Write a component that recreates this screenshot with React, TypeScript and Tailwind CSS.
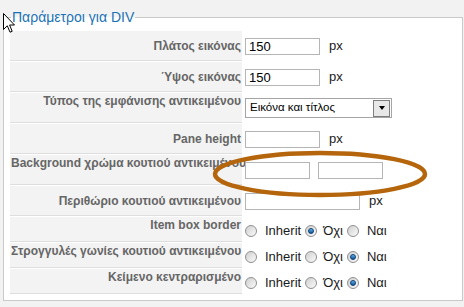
import type { ReactNode } from "react";

type RadioValue = "inherit" | "no" | "yes";

const Radio = ({ checked }: { checked: boolean }) => (
	<span className="flex h-[12px] w-[12px] shrink-0 items-center justify-center rounded-full border border-[#8f8f8f] bg-linear-to-br from-[#cfcfcf] to-[#fbfbfb]">
		{checked && (
			<span className="h-[6px] w-[6px] rounded-full border border-[#0d3f73] bg-linear-to-b from-[#5fb6f0] to-[#0b5396]" />
		)}
	</span>
);

const RadioGroup = ({ value }: { value: RadioValue }) => (
	<div className="flex items-center pt-[2px] text-[13px] text-[#1a1a1a]">
		<Radio checked={value === "inherit"} />
		<span className="ml-[8px]">Inherit</span>
		<span className="ml-[4px]">
			<Radio checked={value === "no"} />
		</span>
		<span className="ml-[6px]">Όχι</span>
		<span className="ml-[4px]">
			<Radio checked={value === "yes"} />
		</span>
		<span className="ml-[8px]">Ναι</span>
	</div>
);

const TextInput = ({ value = "", width }: { value?: string; width: string }) => (
	<div className={`h-[17px] ${width} border border-[#b5b5b5] bg-white px-[3px] text-[13px] leading-[15px] text-black`}>
		{value}
	</div>
);

const Px = () => <span className="ml-[9px] text-[13px] text-[#1a1a1a]">px</span>;

type RowProps = { label: string; top?: boolean; short?: boolean; children: ReactNode };

// long labels overflow to the right, like the old table cells did
const Row = ({ label, top = false, short = false, children }: RowProps) => (
	<div className={`flex ${short ? "h-[25px]" : "h-[30px]"}`}>
		<div
			className={`flex w-[232px] shrink-0 border-b border-[#dedede] bg-[#f3f3f3] pl-[1px] pr-[1px] text-[12px] leading-[14px] font-bold text-[#666] ${
				top ? "items-start pt-[1px]" : "items-center"
			}`}
		>
			<div className="w-full whitespace-nowrap text-right">{label}</div>
		</div>
		<div className="flex flex-1 items-center pl-[3px]">{children}</div>
	</div>
);

export default function App() {
	return (
		<div className="relative h-[307px] w-[464px] overflow-hidden bg-[#f2f2f2] font-['Liberation_Sans',Arial,sans-serif]">
			<fieldset className="ml-[3px] mt-[9px] w-[460px] border border-[#c9c9c9] bg-white px-[6px] pt-[6px] pb-[6px]">
				<legend className="ml-[1px] px-[1px] text-[14px] leading-[16px] text-[#1b72b6]">Παράμετροι για DIV</legend>
				<div className="flex flex-col gap-[1px]">
					<Row label="Πλάτος εικόνας">
						<TextInput value="150" width="w-[75px]" />
						<Px />
					</Row>
					<Row label="Ύψος εικόνας">
						<TextInput value="150" width="w-[75px]" />
						<Px />
					</Row>
					<Row label="Τύπος της εμφάνισης αντικειμένου" top>
						<div className="flex h-[20px] w-[147px] items-center justify-between border border-[#a5a5a5] bg-white pl-[4px] pr-[1px] text-[11.5px] text-black">
							<span>Εικόνα και τίτλος</span>
							<span className="flex h-[17px] w-[17px] items-center justify-center border border-[#7d7d7d] bg-[#e8e8e8]">
								<span className="h-0 w-0 border-x-[3px] border-t-[4px] border-x-transparent border-t-black" />
							</span>
						</div>
					</Row>
					<Row label="Pane height">
						<TextInput width="w-[75px]" />
						<Px />
					</Row>
					<Row label="Background χρώμα κουτιού αντικειμένου" top>
						<div className="flex gap-[8px]">
							<TextInput width="w-[65px]" />
							<TextInput width="w-[65px]" />
						</div>
					</Row>
					<Row label="Περιθώριο κουτιού αντικειμένου">
						<TextInput width="w-[115px]" />
						<Px />
					</Row>
					<Row label="Item box border" top short>
						<RadioGroup value="no" />
					</Row>
					<Row label="Στρογγυλές γωνίες κουτιού αντικειμένου" top short>
						<RadioGroup value="yes" />
					</Row>
					<Row label="Κείμενο κεντραρισμένο" top short>
						<RadioGroup value="yes" />
					</Row>
				</div>
			</fieldset>

			{/* highlight drawn over the colour fields */}
			<svg className="pointer-events-none absolute left-0 top-0" width="464" height="307">
				<ellipse cx="320" cy="174" rx="105" ry="21" fill="none" stroke="#b5650b" strokeWidth="4.5" />
			</svg>

			{/* mouse pointer */}
			<svg className="pointer-events-none absolute left-[3px] top-[13px]" width="13" height="21" viewBox="0 0 13 21">
				<path d="M0.5 0.5 L0.5 16.5 L4.3 12.8 L7 19.2 L9.2 18.3 L6.6 12 L11.5 12 Z" fill="white" stroke="black" strokeWidth="1" />
			</svg>
		</div>
	);
}
